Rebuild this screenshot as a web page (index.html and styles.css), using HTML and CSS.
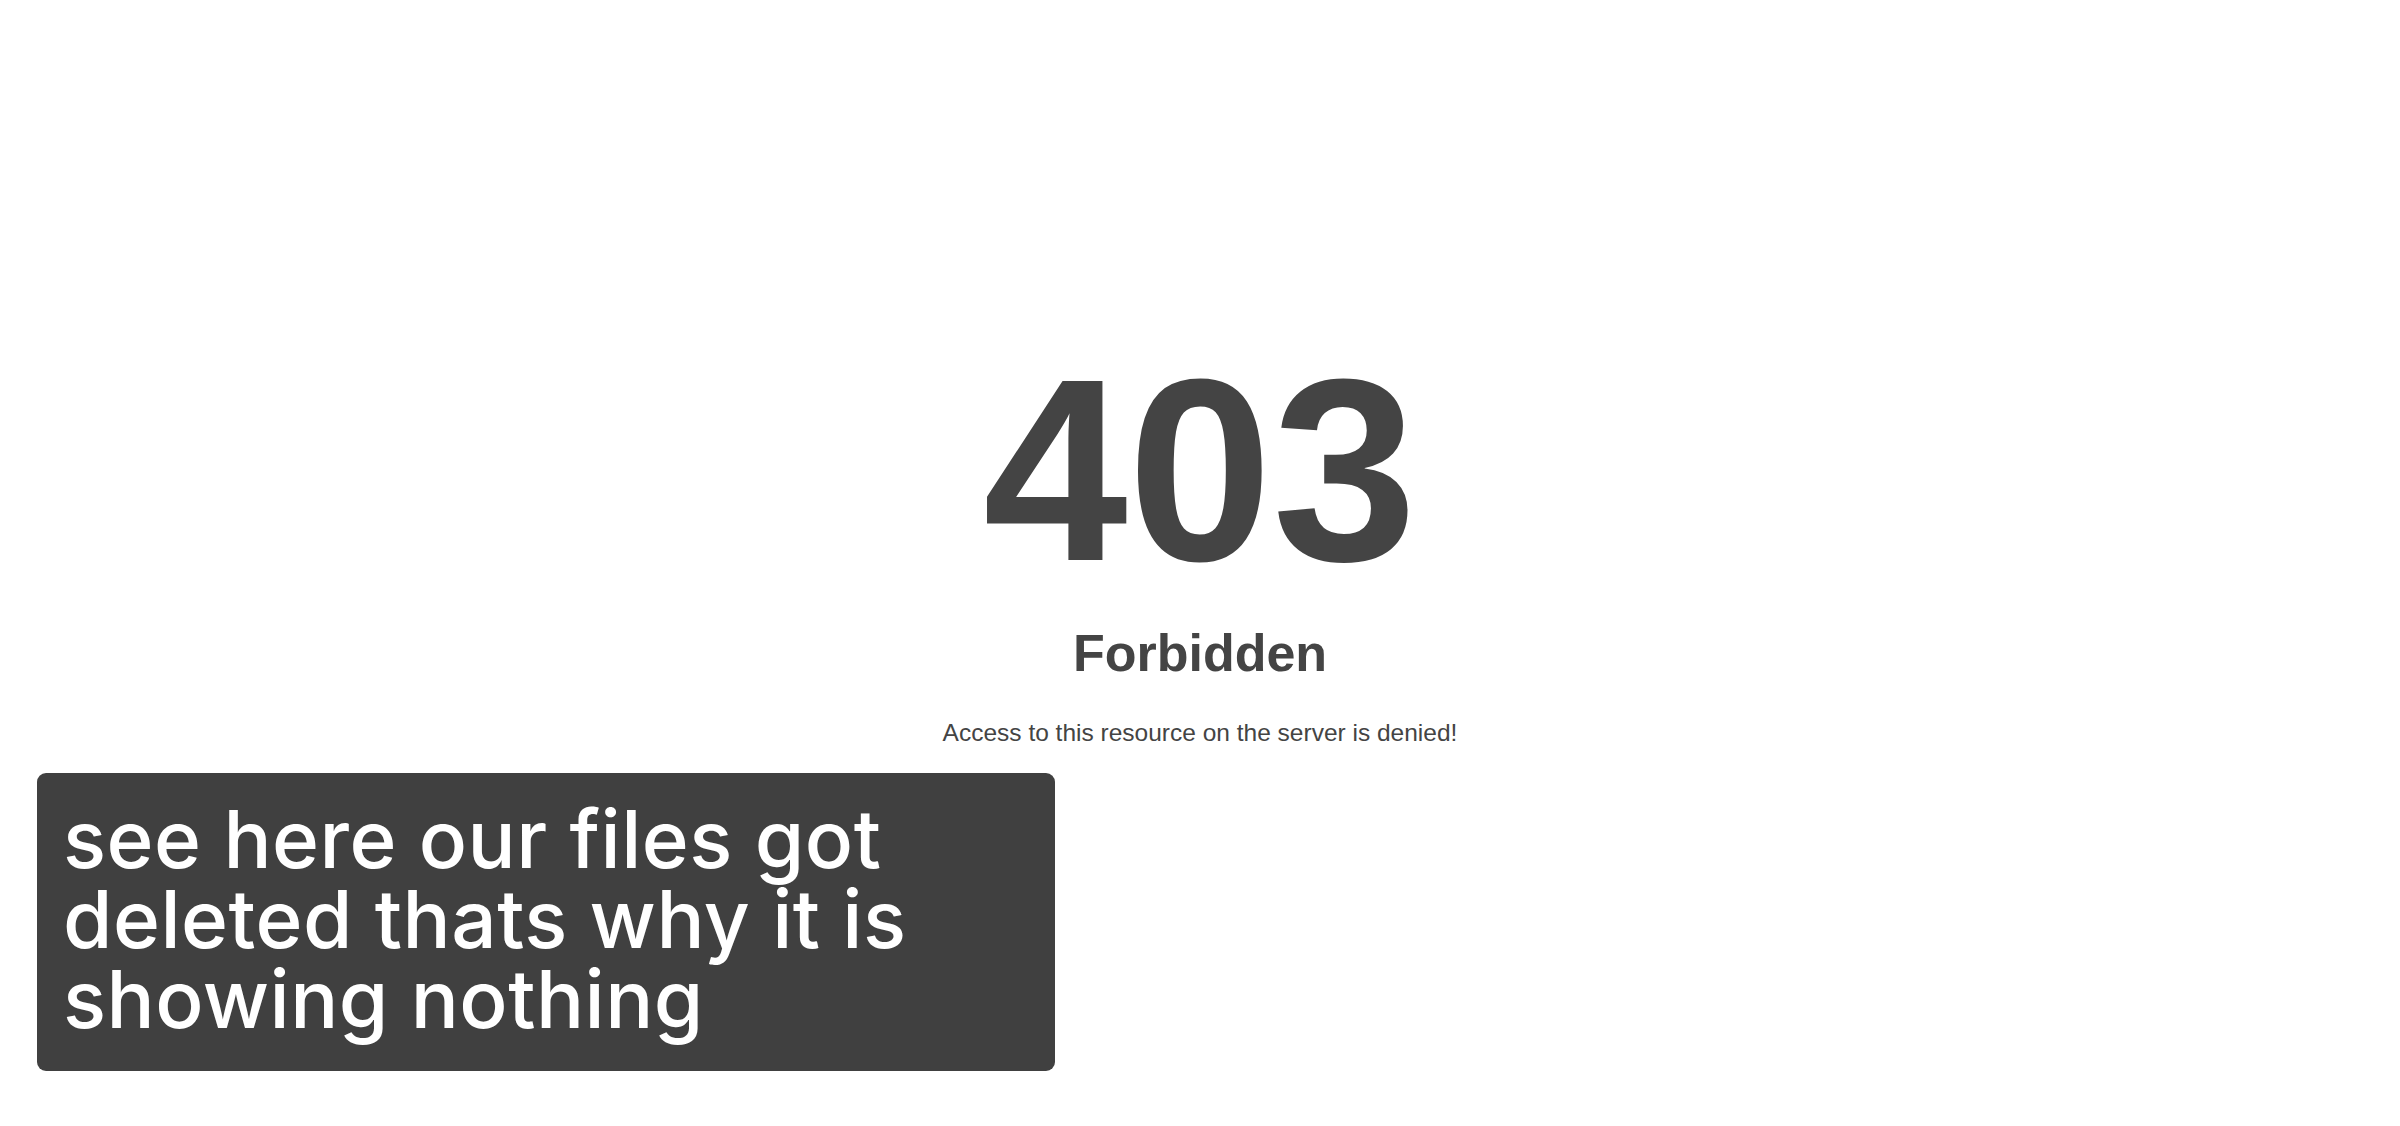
FILE: index.html
```html
<!DOCTYPE html>
<html lang="en">
<head>
<meta charset="utf-8">
<title>403 Forbidden</title>
<link rel="stylesheet" href="styles.css">
</head>
<body>
<main class="error">
  <h1 class="error-code">403</h1>
  <h2 class="error-title">Forbidden</h2>
  <p class="error-text">Access to this resource on the server is denied!</p>
</main>
<div class="caption">see here our files got deleted thats why it is showing nothing</div>
</body>
</html>
```
FILE: styles.css
```css
html, body {
  margin: 0;
  padding: 0;
  background: #ffffff;
}
body {
  width: 2400px;
  height: 1126px;
  overflow: hidden;
  position: relative;
  font-family: "Liberation Sans", Arial, Helvetica, sans-serif;
  color: #444444;
}
.error {
  display: flex;
  flex-direction: column;
  align-items: center;
  padding-top: 340px;
  text-align: center;
}
.error-code {
  margin: 0;
  font-size: 260px;
  line-height: 260px;
  font-weight: bold;
}
.error-title {
  margin: 23px 0 0;
  font-size: 52px;
  line-height: 60px;
  font-weight: bold;
}
.error-text {
  margin: 36px 0 0;
  font-size: 24.5px;
  line-height: 28px;
}
.caption {
  position: absolute;
  left: 37px;
  top: 773px;
  width: 1018px;
  height: 298px;
  box-sizing: border-box;
  padding: 26px 26px 0 26px;
  background: #404040;
  border-radius: 9px;
  color: #ffffff;
  font-family: Inter, "Noto Sans", sans-serif;
  font-size: 80px;
  line-height: 80px;
  font-weight: 500;
  letter-spacing: 0.5px;
}
```
